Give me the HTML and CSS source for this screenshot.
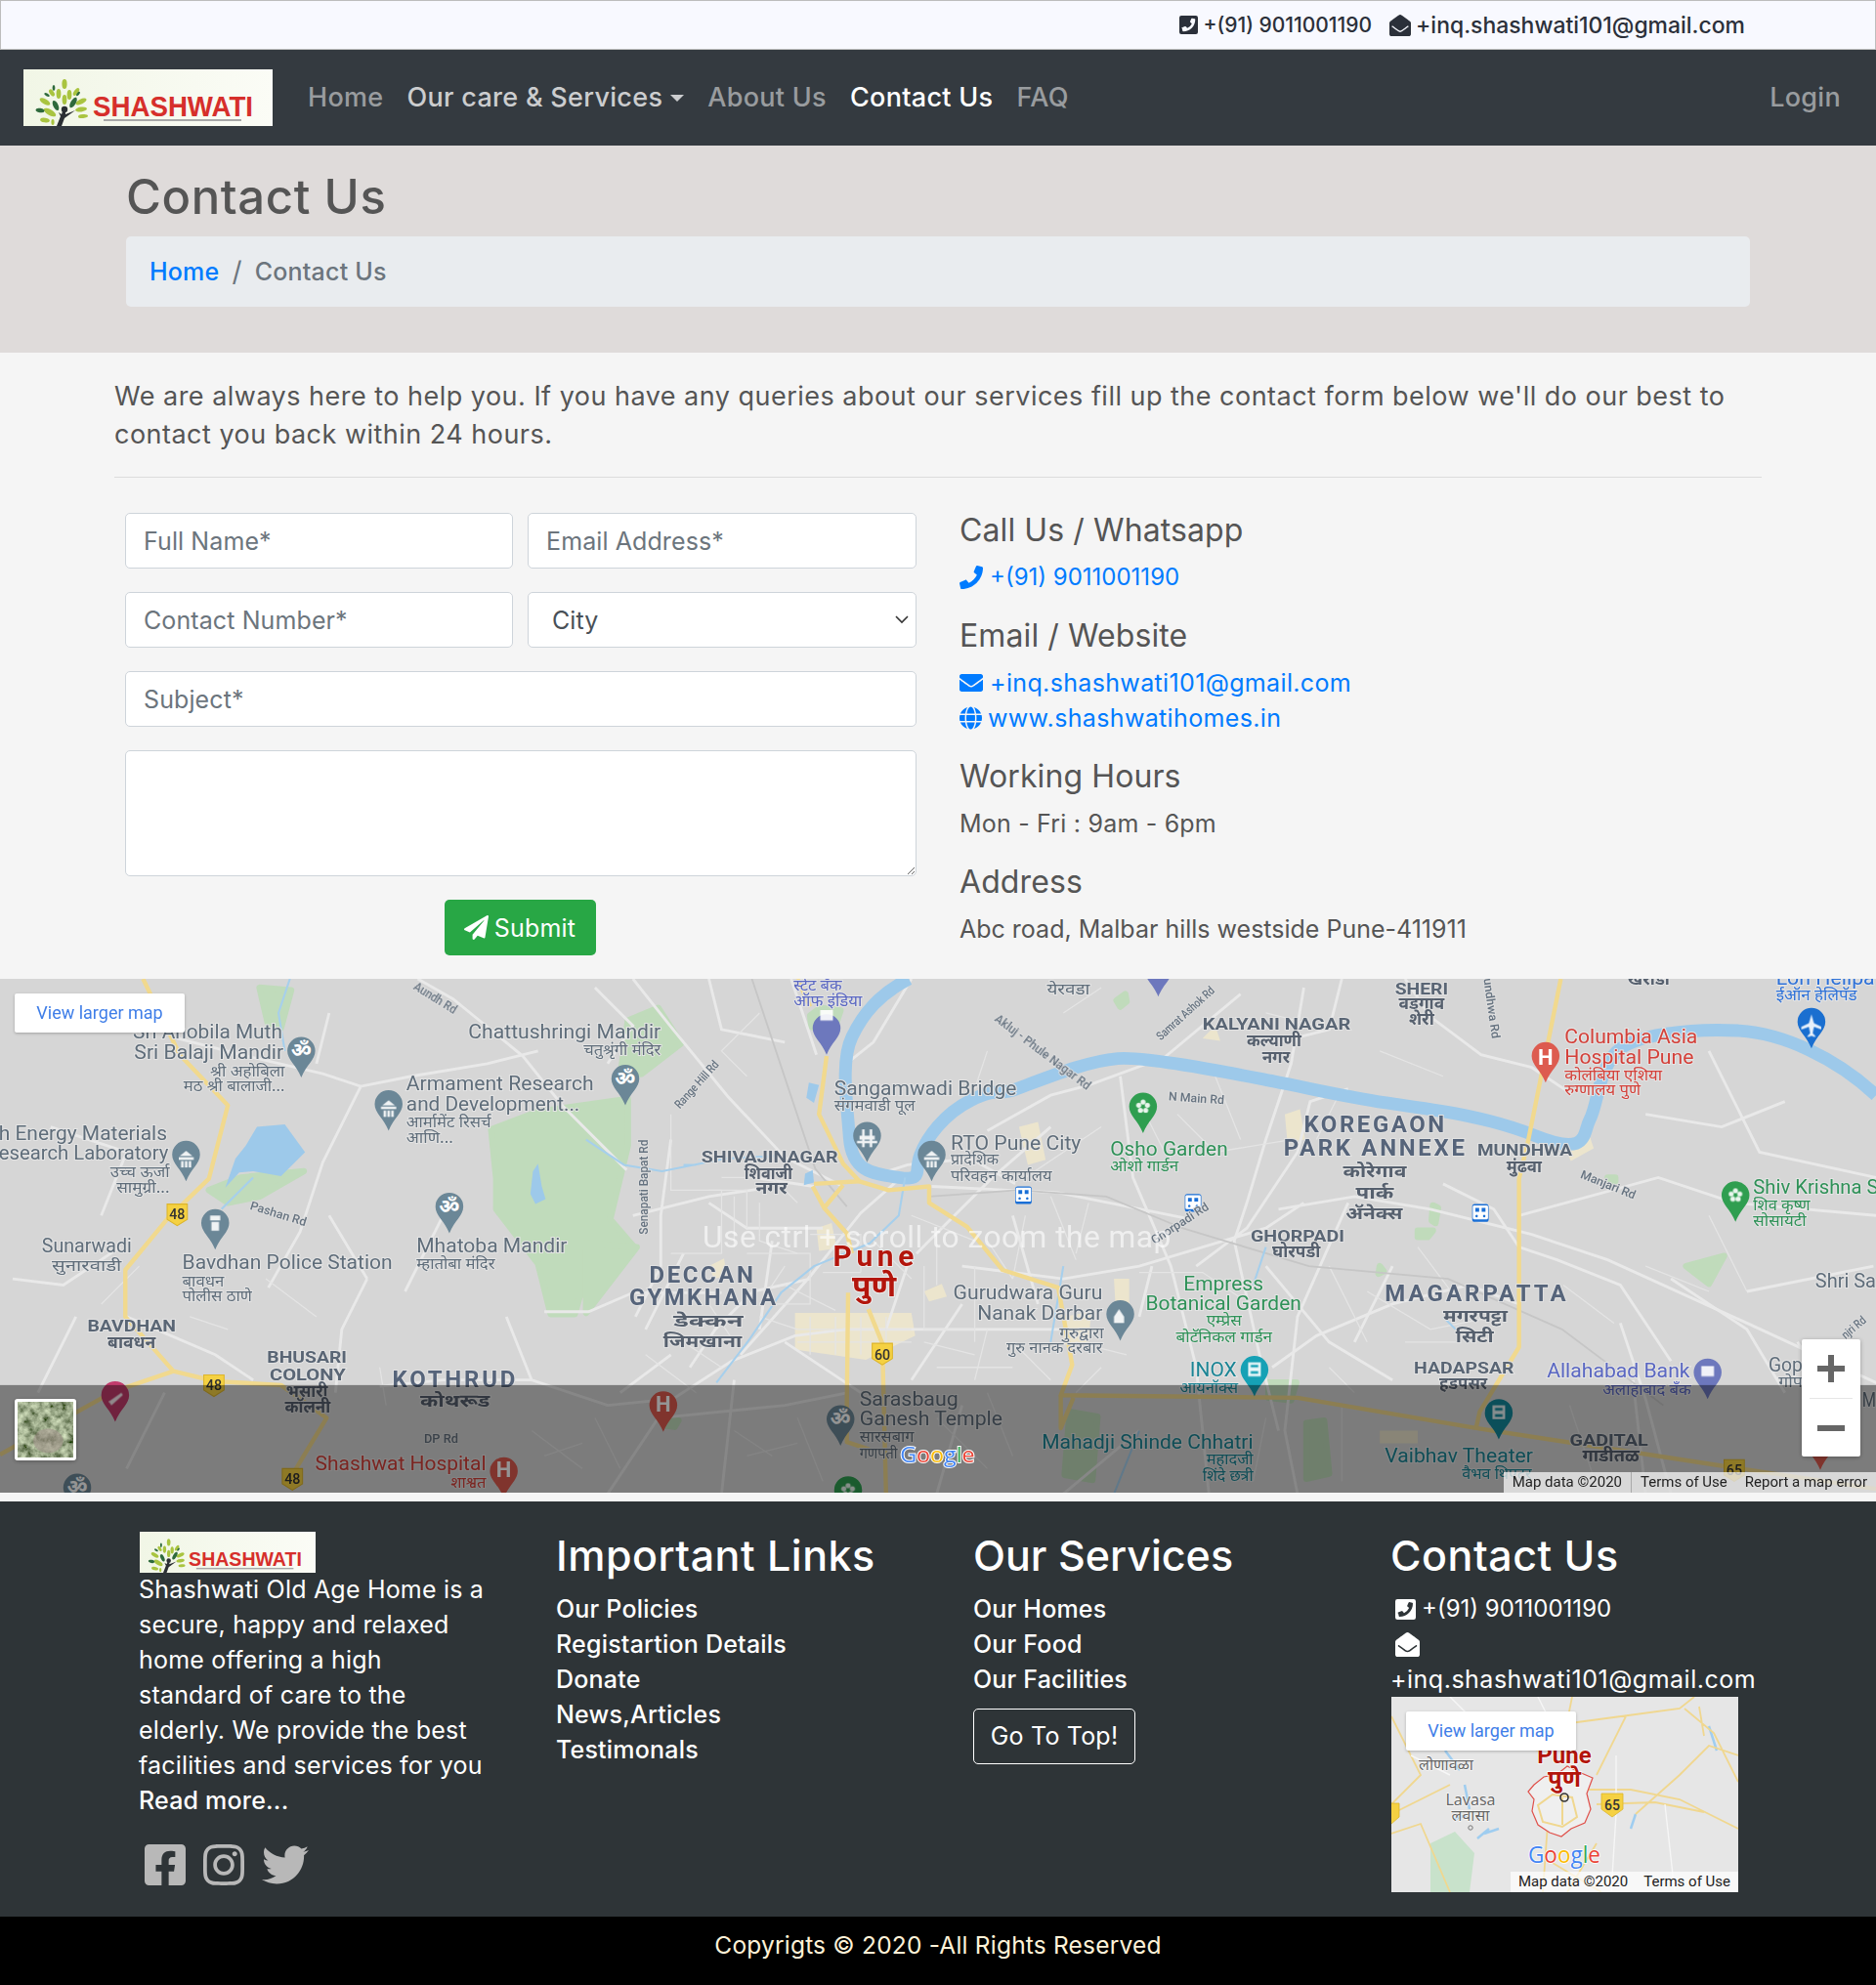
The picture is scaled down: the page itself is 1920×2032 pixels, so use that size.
FILE: index.html
```html
<!DOCTYPE html>
<html lang="en">
<head>
<meta charset="utf-8">
<title>Contact Us</title>
<link rel="stylesheet" href="styles.css">
</head>
<body>
<svg class="defs" width="0" height="0" aria-hidden="true">
  <defs>
    <linearGradient id="logobg" x1="0" x2="1" y1="0" y2="0"><stop offset="0" stop-color="#f1f6e6"/><stop offset="1" stop-color="#fbfcf6"/></linearGradient>
    <filter id="sat" x="0" y="0" width="100%" height="100%">
      <feTurbulence type="fractalNoise" baseFrequency="0.11" numOctaves="4" seed="7"/>
      <feColorMatrix type="matrix" values="1.1 0 0 0 -0.22  1.2 0 0 0 -0.2  0.9 0 0 0 -0.2  0 0 0 0 1"/>
    </filter>
    <symbol id="logo" viewBox="0 0 255 58" preserveAspectRatio="none">
      <rect width="255" height="58" fill="url(#logobg)"/>
      <g class="leaf-l">
        <ellipse cx="42" cy="15" rx="2.6" ry="5"/>
        <ellipse cx="36" cy="25" rx="2.4" ry="5"/>
        <ellipse cx="47" cy="26" rx="2.4" ry="5"/>
        <ellipse cx="42" cy="31" rx="2.4" ry="5"/>
        <ellipse cx="29" cy="24" rx="2.2" ry="4" transform="rotate(-35 29 24)"/>
        <ellipse cx="54" cy="23" rx="2.2" ry="4.5" transform="rotate(35 54 23)"/>
        <ellipse cx="59" cy="33" rx="2.6" ry="6" transform="rotate(65 59 33)"/>
        <ellipse cx="59" cy="41" rx="2.4" ry="6" transform="rotate(82 59 41)"/>
        <ellipse cx="22" cy="33" rx="2.6" ry="6" transform="rotate(-60 22 33)"/>
        <ellipse cx="27" cy="44" rx="3" ry="7" transform="rotate(-60 27 44)"/>
        <ellipse cx="22" cy="52" rx="2.4" ry="5" transform="rotate(-80 22 52)"/>
        <ellipse cx="30" cy="54" rx="1.6" ry="3"/>
        <ellipse cx="61" cy="48" rx="2" ry="5" transform="rotate(85 61 48)"/>
      </g>
      <g class="leaf-d">
        <ellipse cx="31" cy="19" rx="1.4" ry="3"/>
        <ellipse cx="24" cy="26" rx="1.4" ry="3" transform="rotate(-60 24 26)"/>
        <ellipse cx="33" cy="37" rx="2.6" ry="5.5" transform="rotate(-25 33 37)"/>
        <ellipse cx="51" cy="34" rx="2.6" ry="6" transform="rotate(30 51 34)"/>
        <ellipse cx="17" cy="42" rx="2.2" ry="4.5" transform="rotate(-80 17 42)"/>
        <ellipse cx="56" cy="25" rx="1.3" ry="2.6" transform="rotate(40 56 25)"/>
        <path d="M34 58l4-10-2-4 3 2 1-3 3 0 0 3 10-4-11 8-3 8z" class="trunk"/>
        <circle cx="42" cy="41" r="3.2" class="trunk"/>
      </g>
      <text class="logo-word" x="71" y="48" textLength="164" lengthAdjust="spacingAndGlyphs">SHASHWATI</text>
      <rect x="82" y="51" width="141" height="2" fill="#a8a8a8"/>
    </symbol>
    <symbol id="pin" viewBox="0 0 22 32" overflow="visible">
      <path d="M11 0a11 11 0 0 1 11 11c0 7-7 11-11 21C7 22 0 18 0 11A11 11 0 0 1 11 0z"/>
    </symbol>
    <g id="flower">
      <circle cx="0" cy="-3.6" r="2"/><circle cx="3.4" cy="-1.1" r="2"/><circle cx="2.1" cy="2.9" r="2"/><circle cx="-2.1" cy="2.9" r="2"/><circle cx="-3.4" cy="-1.1" r="2"/>
    </g>
    <g id="train">
      <path d="M-5-6h10a1 1 0 0 1 1 1v9a1 1 0 0 1-1 1H-5a1 1 0 0 1-1-1v-9a1 1 0 0 1 1-1zM-4-4v3h3v-3zM1-4v3h3v-3zM-3 1.5a1 1 0 1 0 .01 0zM3 1.5a1 1 0 1 0 .01 0z" fill-rule="evenodd"/>
    </g>
    <symbol id="ic-phone" viewBox="0 0 512 512"><path d="M493.4 24.6l-104-24c-11.3-2.6-22.9 3.3-27.5 13.9l-48 112c-4.2 9.8-1.4 21.3 6.9 28l60.6 49.6c-36 76.7-98.9 140.5-177.2 177.2l-49.6-60.6c-6.8-8.3-18.2-11.1-28-6.9l-112 48C3.9 366.5-2 378.1.6 389.4l24 104C27.7 504.2 37.3 512 48 512c256.1 0 464-207.5 464-464 0-11.2-7.7-20.9-18.6-23.4z"/></symbol>
    <symbol id="ic-env" viewBox="0 0 512 512"><path d="M502.3 190.8c3.9-3.1 9.7-.2 9.7 4.7V400c0 26.5-21.5 48-48 48H48c-26.5 0-48-21.5-48-48V195.6c0-5 5.7-7.8 9.7-4.7 22.4 17.4 52.1 39.5 154.1 113.6 21.1 15.4 56.7 47.8 92.2 47.6 35.7.3 72-32.8 92.3-47.6 102-74.1 131.6-96.3 154-113.7zM256 320c23.2.4 56.6-29.2 73.4-41.4 132.7-96.3 142.8-104.7 173.4-128.7 5.8-4.5 9.2-11.5 9.2-18.9v-19c0-26.5-21.5-48-48-48H48C21.5 64 0 85.5 0 112v19c0 7.4 3.4 14.3 9.2 18.9 30.6 23.9 40.7 32.4 173.4 128.7 16.8 12.2 50.2 41.8 73.4 41.4z"/></symbol>
    <symbol id="ic-globe" viewBox="0 0 496 512"><path d="M336.5 160C322 70.7 287.8 8 248 8s-74 62.7-88.5 152h177zM152 256c0 22.2 1.2 43.5 3.3 64h185.3c2.1-20.5 3.3-41.8 3.3-64s-1.2-43.5-3.3-64H155.3c-2.1 20.5-3.3 41.8-3.3 64zm324.7-96c-28.6-67.9-86.5-120.4-158-141.6 24.4 33.8 41.2 84.7 50 141.6h108zM177.2 18.4C105.8 39.6 47.8 92.1 19.3 160h108c8.7-56.9 25.5-107.8 49.9-141.6zM487.4 192H372.7c2.1 21 3.3 42.5 3.3 64s-1.2 43-3.3 64h114.6c5.5-20.5 8.6-41.8 8.6-64s-3.1-43.5-8.5-64zM120 256c0-21.5 1.2-43 3.3-64H8.6C3.2 212.5 0 233.8 0 256s3.2 43.5 8.6 64h114.6c-2-21-3.2-42.5-3.2-64zm39.5 96c14.5 89.3 48.7 152 88.5 152s74-62.7 88.5-152h-177zm159.3 141.6c71.4-21.2 129.4-73.7 158-141.6h-108c-8.8 56.9-25.6 107.8-50 141.6zM19.3 352c28.6 67.9 86.5 120.4 158 141.6-24.4-33.8-41.2-84.7-50-141.6h-108z"/></symbol>
    <symbol id="ic-phsq" viewBox="0 32 448 448"><path transform="translate(448 0) scale(-1 1)" d="M400 32H48A48 48 0 0 0 0 80v352a48 48 0 0 0 48 48h352a48 48 0 0 0 48-48V80a48 48 0 0 0-48-48zm-16.39 307.37l-15 65A15 15 0 0 1 354 416C194 416 64 286.29 64 126a15.7 15.7 0 0 1 11.63-14.61l65-15A18.23 18.23 0 0 1 144 96a16.27 16.27 0 0 1 13.79 9.09l30 70A17.9 17.9 0 0 1 189 181a17 17 0 0 1-5.5 11.61l-37.89 31a231.91 231.91 0 0 0 110.78 110.78l31-37.89A17 17 0 0 1 309 291a17.9 17.9 0 0 1 5.91 1.21l70 30a16.25 16.25 0 0 1 9.09 13.79 18.23 18.23 0 0 1-.39 3.37z"/></symbol>
    <symbol id="ic-envo" viewBox="0 0 512 512"><path d="M512 464c0 26.51-21.49 48-48 48H48c-26.51 0-48-21.49-48-48V200.724a48 48 0 0 1 18.387-37.776c24.913-19.529 45.501-35.365 164.2-121.511C199.412 29.17 232.797-.347 256 .003c23.198-.354 56.596 29.172 73.413 41.433 118.687 86.137 139.303 101.995 164.2 121.512A48 48 0 0 1 512 200.724V464zm-65.666-196.605c-2.563-3.728-7.7-4.595-11.339-1.907-22.845 16.873-55.462 40.705-105.582 77.079-16.825 12.266-50.21 41.781-73.413 41.43-23.211.344-56.559-29.143-73.413-41.43-50.114-36.37-82.734-60.204-105.582-77.079-3.639-2.688-8.776-1.821-11.339 1.907l-9.072 13.196a7.998 7.998 0 0 0 1.839 10.967c22.887 16.899 55.454 40.69 105.303 76.868 20.274 14.781 56.524 47.813 92.264 47.573 35.724.242 71.961-32.771 92.263-47.573 49.85-36.179 82.418-59.97 105.303-76.868a7.998 7.998 0 0 0 1.839-10.967l-9.071-13.196z"/></symbol>
  </defs>
</svg>

<div class="topbar">
  <span class="top-item top-phone"><svg class="ic ic-top-ph"><use href="#ic-phsq"/></svg>+(91) 9011001190</span>
  <span class="top-item top-mail"><svg class="ic ic-top-en"><use href="#ic-envo"/></svg>+inq.shashwati101@gmail.com</span>
</div>

<nav class="navbar">
  <svg class="nav-logo" role="img" aria-label="Shashwati"><use href="#logo"/></svg>
  <a class="nav-link">Home</a>
  <a class="nav-link nav-open">Our care &amp; Services<span class="caret"></span></a>
  <a class="nav-link">About Us</a>
  <a class="nav-link nav-active">Contact Us</a>
  <a class="nav-link">FAQ</a>
  <a class="nav-link nav-login">Login</a>
</nav>

<header class="page-head">
  <h1 class="page-title">Contact Us</h1>
  <div class="crumbs"><a class="crumb-home">Home</a><span class="crumb-sep">/</span><span class="crumb-cur">Contact Us</span></div>
</header>

<main class="main">
  <p class="intro">We are always here to help you. If you have any queries about our services fill up the contact form below we'll do our best to contact you back within 24 hours.</p>
  <hr class="rule">
  <div class="contact-row">
    <form class="form">
      <div class="form-two">
        <input class="field" placeholder="Full Name*">
        <input class="field" placeholder="Email Address*">
      </div>
      <div class="form-two">
        <input class="field" placeholder="Contact Number*">
        <select class="field field-select"><option>City</option></select>
      </div>
      <input class="field" placeholder="Subject*">
      <textarea class="field field-area"></textarea>
      <button class="submit" type="button"><svg class="ic ic-plane" viewBox="0 0 512 512"><path d="M476 3.2L12.5 270.6c-18.1 10.4-15.8 35.6 2.2 43.2L121 358.4l287.3-253.2c5.5-4.9 13.3 2.6 8.6 8.3L176 407v80.5c0 23.6 28.5 32.9 42.5 15.8L282 426l124.6 52.2c14.2 6 30.4-2.9 33-18.2l72-432C515 7.8 493.3-6.8 476 3.2z"/></svg>Submit</button>
    </form>
    <div class="info">
      <h4 class="info-h">Call Us / Whatsapp</h4>
      <a class="info-link info-phone"><svg class="ic ic-blue"><use href="#ic-phone"/></svg>+(91) 9011001190</a>
      <h4 class="info-h info-next">Email / Website</h4>
      <a class="info-link"><svg class="ic ic-blue"><use href="#ic-env"/></svg>+inq.shashwati101@gmail.com</a>
      <a class="info-link info-web"><svg class="ic ic-blue ic-globe"><use href="#ic-globe"/></svg>www.shashwatihomes.in</a>
      <h4 class="info-h info-next">Working Hours</h4>
      <p class="info-text">Mon - Fri : 9am - 6pm</p>
      <h4 class="info-h info-next">Address</h4>
      <p class="info-text info-addr">Abc road, Malbar hills westside Pune-411911</p>
    </div>
  </div>
</main>

<section class="map">
  <svg class="map-svg" viewBox="0 773 1482 406" preserveAspectRatio="none">
    <rect x="0" y="773" width="1482" height="406" fill="#d6d6d6"/>
    <!-- parks -->
    <g class="park">
      <path d="M388 892L425 878 496 868 496 905 482 963 501 985 458 1024 454 1038 435 1038 425 998 392 955 392 931z"/>
      <path d="M496 806L520 796 538 824 507 848 490 850z"/>
      <path d="M463 982L503 985 463 1037z"/>
      <path d="M165 940L190 930 240 925 205 945 180 950z"/>
      <path d="M205 780L230 782 222 812 212 810z"/>
      <path d="M1270 930h6v3h-6zM1120 972h12l-4 5h-8zM1090 1000l3 4-4 2zM845 1115l22 4-4 50-22-4zM1032 1124l14-2 4 42-18 4zM1332 1000l30-8-12 22z"/>
      <path d="M882 790l7-5 1 6-5 4zM1002 1092h22l-4 14-18-2zM1132 952l4 2-2 12-3-2zM522 1122l14 0-3 5-8-1zM640 802l8-6 16 2-6 18-17-5z"/>
    </g>
    <!-- urban -->
    <g class="urban">
      <path d="M628 1037L720 1037 723 1055 684 1074 628 1066z"/>
      <path d="M805 890l15-4 6 30-14 4zM1015 880l12-4 4 24-14 2zM1235 905l20-10 4 12-18 10zM880 1010l12 0 0 36-10 0zM645 970l12-4 4 20-14 2zM840 1040l22-4-2 24-20 2zM1090 1130h30v10h-30zM730 1020l14-6 4 10-14 4zM950 820l10-10 4 12zM560 1000l12-6 2 14-10 2z"/>
    </g>
    <!-- white roads -->
    <g class="road">
      <path d="M500 773l30 38 45 55 45 48 44 22M330 773l28 16 55 45 32 40 50 50M140 820l55 14 60 14 30 10 40-8 60-10 40-10M285 858l-30 60-18 55-25 44M430 1036l35 0 35-15 70 0M595 930l48 7M500 960l60-15 40-6"/>
      <path d="M585 1070l55-62 40-50 34-30M516 1115l62-40 50-20 40-5 50 0 120 0M640 1010l-45 10-30 30-20 30M625 773l20 60M720 773l-30 50-25 20M802 935l-35-20-50 5-25 8M830 890l-46 40-40 40-20 20M760 1000l80 10 60-10 100-30 30-20M736 937l100 5 100 20M945 1000l40-30 40-60 10-40 30-10M1010 955l60-10 60 10 80 20 60 20 110 50 130 60"/>
      <path d="M980 785l-60 50-60 22-30 8-50 28M1030 780l-10 60-20 60-15 50-10 30 20 90 15 60M1110 773l20 30 40 30 40 10 30 20M1140 935l40 20 20 30 30 10 50 20 40 60M1200 960l110 -30 60 20 112 10M885 850l10 80 30 70 20 80 10 100M1065 950l-40 90-10 90 10 50M1200 1030l-40 -15 -60 15 -60 25 -35 25M1280 1045l20 60 20 75"/>
      <path d="M300 1095l50-5 70 0 60 20 50-5M10 1010l40 5 45-30M100 1040l70 30 30 20M290 1010l-20 40-5 50M260 960l30 50M130 1100l-30 60M400 1040l20 50M520 1120l100-10 50-10M520 1120l-40 60M580 1090l-10 90M760 1110l-20 70M900 1130l-60 50M1290 1090l10 90M1420 1060l40 60M1380 1020l100 -20M1350 830l40 80 92 20"/>
      <path d="M530 900l-8 60 0 40 -20 40M560 950l30 20 60 0M610 980l-10 70M720 990l-20 60M760 1030l-40 60M620 1060l60 40M530 1070l-40 30M540 990l-30 60M800 960l20 70M900 1040l10 -40M1000 1000l50 60 50 30M1100 1000l-30 60M560 773l10 40 50 10M470 780l30 30 -20 30M260 800l-10 40M40 890l60 20 -20 50M350 960l-30 60M60 1040l-30 60M1060 773l-10 40 -40 10M1300 880l60 10 50 -20M1320 1010l60 40 30 50"/>
    </g>
    <g class="road-thin">
      <path d="M530 880v60h40v50h-40M570 930h40l20 20M580 945v40M590 990h50v40h-30M620 1000l-20 30M730 1000v50h40M770 1000v60M640 1040v30M660 1040v30M680 1040v30M700 1040v30M630 1050h90M630 1060h90M870 890l-60 40M900 1005h50l30 20M1050 1000l30 60M1120 985l30 40M1080 1020l50 30 50-10M1235 1015l40 30M1110 1060h40M1050 1080l20 20M1350 960l30 60M1300 1000l50 20M80 1030l30-30M150 1040l30 10M210 1010l40 30M300 1080l5 30M420 1130l40 30M430 1150l30-10M470 1120l20 40M580 1130l30 20M590 1150l40-10M630 1120l20 50M740 1120l40 40M780 1100l20 50M1000 1120l-10 50M1060 1110l0 60M1240 1110l20 60"/>
      <path d="M560 940h30v30M600 950v30l30 10M640 975h40v30M690 980l30 30M720 960l50 20M740 975v40M780 980l20 30M810 960l-10 50M830 945l20 50M860 950l-10 40M650 1005h30M620 1015l40 20M600 1040l30 10M560 1030l20 30M540 1060l30 20M510 1070l40 30M730 1060l40 10M740 1080h60M780 1050l-10 40M800 1060l30 30M850 1060l40 10M870 1080l-20 20M900 870l20 40M930 880l30 30 60-10M960 850l20 50M1060 860l-20 40M1090 830l50 20M1000 800l40 10M840 800l30-20M780 830l-10 30M600 800l-30 30 20 20"/>
    </g>
    <path class="rail" d="M594 773l50 150 25 30M734 945l70 -5 70 5 60 25 100 30 110 10 90 40 80 60"/>
    <!-- water -->
    <path class="lake" d="M203 890L225 888 241 910 222 929 200 925 189 926 178 938 186 915 194 905z"/>
    <path class="lake" d="M421 925l4-6 3 18 3 10-8 4-4-8zM636 927l6-3 1 10-8 2zM639 855l8 2-4 14-6-4z"/>
    <path class="river" d="M718 773C695 785 682 800 673 819S669 870 671 898 690 927 710 930 722 925 727 912 745 880 767 869 788 866 803 860C835 848 860 838 883 836S975 848 1006 854 1062 866 1095 871 1170 880 1213 897 1250 895 1256 884 1262 850 1275 833 1340 812 1374 814 1450 835 1482 865"/>
    <path class="river-thin" d="M715 930l-5 30-23 22-44 18-26 21-25 37-26 34M200 930l-25 25M463 900l30 20 30 5 50-10 40-2M540 920l10 0M840 1000l-10 60M900 1130l-20 50M1000 985l-10 30M230 770l-10 30 5 30M1140 1040l10 10"/>
    <!-- highways -->
    <g class="hwy">
      <path d="M653 834L647 880 666 919 679 933 702 940 734 937 734 950 764 969 792 1003 836 1017 847 1078 838 1102 1025 1104 1166 1128 1355 1157 1482 1176"/>
      <path d="M643 935L679 933M642 937L651 954 669 974 673 990M651 954L666 936M670 1021L669 1108 669 1139 687 1145M686 1034L697 1061 700 1181M838 1102L838 1128 848 1104"/>
      <path d="M1233 773L1207 902 1200 931 1200 1064 1169 1115 1166 1128"/>
      <path d="M113 773L142 833 180 873 165 931 132 963 99 1003 99 1040 137 1083 170 1091 222 1094 258 1120 232 1163M90 1099L137 1083M0 1149L90 1099"/>
      <path d="M630 773l10 22"/>
    </g>
    <!-- pins -->
    <g class="pin-slate">
      <use href="#pin" x="227" y="819" width="22" height="32"/>
      <use href="#pin" x="483" y="841" width="22" height="32"/>
      <use href="#pin" x="296" y="861" width="22" height="32"/>
      <use href="#pin" x="136" y="901" width="22" height="32"/>
      <use href="#pin" x="344" y="942" width="22" height="32"/>
      <use href="#pin" x="159" y="955" width="22" height="32"/>
      <use href="#pin" x="653" y="1110" width="22" height="32"/>
      <use href="#pin" x="50" y="1164" width="22" height="32"/>
      <use href="#pin" x="674" y="886" width="22" height="32"/>
      <use href="#pin" x="725" y="901" width="22" height="32"/>
      <use href="#pin" x="874" y="1027" width="22" height="32"/>
    </g>
    <g class="pin-indigo">
      <use href="#pin" x="642" y="801" width="22" height="32"/>
      <use href="#pin" x="904" y="755" width="22" height="32"/>
      <use href="#pin" x="1338" y="1073" width="22" height="32"/>
    </g>
    <g class="pin-green">
      <use href="#pin" x="892" y="863" width="22" height="32"/>
      <use href="#pin" x="1360" y="933" width="22" height="32"/>
      <use href="#pin" x="659" y="1166" width="22" height="32"/>
    </g>
    <g class="pin-red">
      <use href="#pin" x="1210" y="823" width="22" height="32"/>
      <use href="#pin" x="513" y="1099" width="22" height="32"/>
      <use href="#pin" x="387" y="1151" width="22" height="32"/>
      <use href="#pin" x="1427" y="1129" width="22" height="32"/>
    </g>
    <use class="pin-blue" href="#pin" x="1420" y="796" width="22" height="32"/>
    <use class="pin-teal" href="#pin" x="980" y="1071" width="22" height="32"/>
    <use class="pin-teal2" href="#pin" x="1173" y="1105" width="22" height="32"/>
    <use class="pin-pink" href="#pin" x="80" y="1091" width="22" height="32"/>
    <!-- pin glyphs -->
    <g class="om">
      <text x="238" y="835">ॐ</text><text x="494" y="857">ॐ</text><text x="355" y="958">ॐ</text><text x="664" y="1126">ॐ</text><text x="61" y="1180">ॐ</text>
    </g>
    <g class="glyph">
      <path d="M301 876v-2h12v2zM302 873l5-4 5 4zM303 877h2v5h-2zM306 877h2v5h-2zM309 877h2v5h-2zM141 916v-2h12v2zM142 913l5-4 5 4zM143 917h2v5h-2zM146 917h2v5h-2zM149 917h2v5h-2zM730 916v-2h12v2zM731 913l5-4 5 4zM732 917h2v5h-2zM735 917h2v5h-2zM738 917h2v5h-2zM679 897h12v3h-12zM677 901h16v2h-16zM681 892h2v14h-2zM687 892h2v14h-2zM166 960h8v4h-8zM167 965h6v7h-6zM880 1040l4-6 4 6v5h-8z"/>
      <use href="#flower" x="903" y="874"/><use href="#flower" x="1371" y="944"/><use href="#flower" x="670" y="1177"/>
      <path d="M1431 801l2 7 6 3v2l-6-2-1 5 2 2v1l-3-1-3 1v-1l2-2-1-5-6 2v-2l6-3z"/>
      <path d="M986 1076h10v11h-10zM988 1078v2h6v-2zM988 1083v2h6v-2z" fill-rule="evenodd"/>
      <path d="M1179 1110h10v11h-10zM1181 1112v2h6v-2zM1181 1117v2h6v-2z" fill-rule="evenodd"/>
      <path d="M648 798h10v8h-10zM1344 1079h10v8h-10z"/>
      <path d="M86 1107l10-7 1 2-9 8zM91 1100l6 10"/>
    </g>
    <g class="pin-h">
      <text x="1221" y="841" text-anchor="middle">H</text>
      <text x="524" y="1115" text-anchor="middle">H</text>
      <text x="398" y="1167" text-anchor="middle">H</text>
    </g>
    <!-- metro -->
    <g class="metro"><rect x="802" y="937" width="13" height="14" rx="2"/><rect x="936" y="943" width="13" height="14" rx="2"/><rect x="1163" y="951" width="13" height="14" rx="2"/></g>
    <g class="metro-in"><use href="#train" x="808.500" y="944"/><use href="#train" x="942.500" y="950"/><use href="#train" x="1169.500" y="958"/></g>
    <!-- shields -->
    <g class="shield">
      <path d="M132 951h16v12l-8 5-8-5z"/><path d="M161 1086h16v12l-8 5-8-5z"/><path d="M223 1160h16v12l-8 5-8-5z"/><path d="M689 1061h16v12l-8 5-8-5z"/><path d="M1362 1153h16v12l-8 5-8-5z"/>
    </g>
    <g class="shield-t">
      <text x="140" y="963">48</text><text x="169" y="1098">48</text><text x="231" y="1172">48</text><text x="697" y="1074">60</text><text x="1370" y="1165">65</text>
    </g>
    <!-- road names -->
    <g class="rd">
      <text transform="translate(326 781) rotate(32)" textLength="38" lengthAdjust="spacingAndGlyphs">Aundh Rd</text>
      <text transform="translate(537 876) rotate(-48)" textLength="47" lengthAdjust="spacingAndGlyphs">Range Hill Rd</text>
      <text transform="translate(197 955) rotate(17)" textLength="46" lengthAdjust="spacingAndGlyphs">Pashan Rd</text>
      <text transform="translate(512 975) rotate(-90)" textLength="75" lengthAdjust="spacingAndGlyphs">Senapati Bapat Rd</text>
      <text transform="translate(785 806) rotate(37)" textLength="92" lengthAdjust="spacingAndGlyphs">Akluj - Phule Nagar Rd</text>
      <text transform="translate(917 822) rotate(-42)" textLength="58" lengthAdjust="spacingAndGlyphs">Samrat Ashok Rd</text>
      <text transform="translate(923 869) rotate(4)" textLength="44" lengthAdjust="spacingAndGlyphs">N Main Rd</text>
      <text transform="translate(1248 930) rotate(22)" textLength="46" lengthAdjust="spacingAndGlyphs">Manjari Rd</text>
      <text transform="translate(912 983) rotate(-33)" textLength="52" lengthAdjust="spacingAndGlyphs">Ghorpadi Rd</text>
      <text transform="translate(1172 773) rotate(82)" textLength="48" lengthAdjust="spacingAndGlyphs">undhwa Rd</text>
      <text transform="translate(335 1140)" textLength="27" lengthAdjust="spacingAndGlyphs">DP Rd</text>
      <text transform="translate(1458 1058) rotate(-40)" textLength="22" lengthAdjust="spacingAndGlyphs">njri Rd</text>
    </g>
    <!-- place labels -->
    <g class="lbl">
      <text x="105" y="820" textLength="118" lengthAdjust="spacingAndGlyphs">Sri Ahobila Muth</text>
      <text x="106" y="836" textLength="118" lengthAdjust="spacingAndGlyphs">Sri Balaji Mandir</text>
      <text x="370" y="820" textLength="152" lengthAdjust="spacingAndGlyphs">Chattushringi Mandir</text>
      <text x="321" y="861" textLength="148" lengthAdjust="spacingAndGlyphs">Armament Research</text>
      <text x="321" y="877" textLength="137" lengthAdjust="spacingAndGlyphs">and Development...</text>
      <text x="-1" y="900" textLength="133" lengthAdjust="spacingAndGlyphs">h Energy Materials</text>
      <text x="-1" y="916" textLength="134" lengthAdjust="spacingAndGlyphs">esearch Laboratory</text>
      <text x="33" y="989" textLength="71" lengthAdjust="spacingAndGlyphs">Sunarwadi</text>
      <text x="144" y="1002" textLength="166" lengthAdjust="spacingAndGlyphs">Bavdhan Police Station</text>
      <text x="329" y="989" textLength="119" lengthAdjust="spacingAndGlyphs">Mhatoba Mandir</text>
      <text x="659" y="865" textLength="144" lengthAdjust="spacingAndGlyphs">Sangamwadi Bridge</text>
      <text x="751" y="908" textLength="103" lengthAdjust="spacingAndGlyphs">RTO Pune City</text>
      <text x="679" y="1110" textLength="78" lengthAdjust="spacingAndGlyphs">Sarasbaug</text>
      <text x="679" y="1126" textLength="113" lengthAdjust="spacingAndGlyphs">Ganesh Temple</text>
      <text x="753" y="1026" textLength="118" lengthAdjust="spacingAndGlyphs">Gurudwara Guru</text>
      <text x="772" y="1042" textLength="99" lengthAdjust="spacingAndGlyphs">Nanak Darbar</text>
      <text x="1434" y="1017" textLength="48" lengthAdjust="spacingAndGlyphs">Shri Sa</text>
      <text x="1397" y="1083" textLength="27" lengthAdjust="spacingAndGlyphs">Gop</text>
      <text x="1471" y="1111" textLength="11" lengthAdjust="spacingAndGlyphs">M</text>
    </g>
    <g class="dev">
      <text x="166" y="850" textLength="59" lengthAdjust="spacingAndGlyphs">श्री अहोबिला</text>
      <text x="145" y="862" textLength="80" lengthAdjust="spacingAndGlyphs">मठ श्री बालाजी...</text>
      <text x="461" y="833" textLength="61" lengthAdjust="spacingAndGlyphs">चतुश्रृंगी मंदिर</text>
      <text x="321" y="890" textLength="67" lengthAdjust="spacingAndGlyphs">आर्मामेंट रिसर्च</text>
      <text x="321" y="903" textLength="37" lengthAdjust="spacingAndGlyphs">आणि...</text>
      <text x="87" y="930" textLength="47" lengthAdjust="spacingAndGlyphs">उच्च ऊर्जा</text>
      <text x="92" y="942" textLength="42" lengthAdjust="spacingAndGlyphs">सामुग्री...</text>
      <text x="41" y="1004" textLength="55" lengthAdjust="spacingAndGlyphs">सुनारवाडी</text>
      <text x="144" y="1016" textLength="33" lengthAdjust="spacingAndGlyphs">बावधन</text>
      <text x="144" y="1028" textLength="55" lengthAdjust="spacingAndGlyphs">पोलीस ठाणे</text>
      <text x="329" y="1002" textLength="62" lengthAdjust="spacingAndGlyphs">म्हातोबा मंदिर</text>
      <text x="659" y="877" textLength="64" lengthAdjust="spacingAndGlyphs">संगमवाडी पूल</text>
      <text x="751" y="920" textLength="38" lengthAdjust="spacingAndGlyphs">प्रादेशिक</text>
      <text x="751" y="933" textLength="80" lengthAdjust="spacingAndGlyphs">परिवहन कार्यालय</text>
      <text x="679" y="1139" textLength="43" lengthAdjust="spacingAndGlyphs">सारसबाग</text>
      <text x="679" y="1152" textLength="30" lengthAdjust="spacingAndGlyphs">गणपती</text>
      <text x="837" y="1057" textLength="35" lengthAdjust="spacingAndGlyphs">गुरुद्वारा</text>
      <text x="795" y="1069" textLength="76" lengthAdjust="spacingAndGlyphs">गुरु नानक दरबार</text>
      <text x="827" y="785" textLength="34" lengthAdjust="spacingAndGlyphs">येरवडा</text>
      <text x="1405" y="1096" textLength="19" lengthAdjust="spacingAndGlyphs">गोप</text>
    </g>
    <g class="area">
      <text x="69" y="1052" textLength="70" lengthAdjust="spacingAndGlyphs">BAVDHAN</text>
      <text x="211" y="1076" textLength="63" lengthAdjust="spacingAndGlyphs">BHUSARI</text>
      <text x="213" y="1090" textLength="60" lengthAdjust="spacingAndGlyphs">COLONY</text>
      <text x="554" y="918" textLength="108" lengthAdjust="spacingAndGlyphs">SHIVAJINAGAR</text>
      <text x="950" y="813" textLength="117" lengthAdjust="spacingAndGlyphs">KALYANI NAGAR</text>
      <text x="1102" y="785" textLength="42" lengthAdjust="spacingAndGlyphs">SHERI</text>
      <text x="1167" y="913" textLength="75" lengthAdjust="spacingAndGlyphs">MUNDHWA</text>
      <text x="988" y="981" textLength="74" lengthAdjust="spacingAndGlyphs">GHORPADI</text>
      <text x="1117" y="1085" textLength="79" lengthAdjust="spacingAndGlyphs">HADAPSAR</text>
      <text x="1240" y="1142" textLength="62" lengthAdjust="spacingAndGlyphs">GADITAL</text>
    </g>
    <g class="area-big">
      <text x="310" y="1096" textLength="97" lengthAdjust="spacing">KOTHRUD</text>
      <text x="513" y="1013" textLength="82" lengthAdjust="spacing">DECCAN</text>
      <text x="497" y="1031" textLength="116" lengthAdjust="spacing">GYMKHANA</text>
      <text x="1030" y="894" textLength="111" lengthAdjust="spacing">KOREGAON</text>
      <text x="1014" y="913" textLength="143" lengthAdjust="spacing">PARK ANNEXE</text>
      <text x="1094" y="1028" textLength="143" lengthAdjust="spacing">MAGARPATTA</text>
    </g>
    <g class="dev-b">
      <text x="85" y="1065" textLength="38" lengthAdjust="spacingAndGlyphs">बावधन</text>
      <text x="226" y="1103" textLength="33" lengthAdjust="spacingAndGlyphs">भसारी</text>
      <text x="225" y="1116" textLength="36" lengthAdjust="spacingAndGlyphs">कॉलनी</text>
      <text x="332" y="1111" textLength="55" lengthAdjust="spacingAndGlyphs">कोथरूड</text>
      <text x="532" y="1048" textLength="55" lengthAdjust="spacingAndGlyphs">डेक्कन</text>
      <text x="524" y="1064" textLength="62" lengthAdjust="spacingAndGlyphs">जिमखाना</text>
      <text x="588" y="931" textLength="38" lengthAdjust="spacingAndGlyphs">शिवाजी</text>
      <text x="597" y="943" textLength="25" lengthAdjust="spacingAndGlyphs">नगर</text>
      <text x="985" y="826" textLength="43" lengthAdjust="spacingAndGlyphs">कल्याणी</text>
      <text x="997" y="839" textLength="22" lengthAdjust="spacingAndGlyphs">नगर</text>
      <text x="1105" y="797" textLength="36" lengthAdjust="spacingAndGlyphs">वडगाव</text>
      <text x="1113" y="809" textLength="20" lengthAdjust="spacingAndGlyphs">शेरी</text>
      <text x="1286" y="778" textLength="33" lengthAdjust="spacingAndGlyphs">खराडी</text>
      <text x="1061" y="930" textLength="50" lengthAdjust="spacingAndGlyphs">कोरेगाव</text>
      <text x="1071" y="947" textLength="30" lengthAdjust="spacingAndGlyphs">पार्क</text>
      <text x="1063" y="963" textLength="45" lengthAdjust="spacingAndGlyphs">ॲनेक्स</text>
      <text x="1190" y="926" textLength="28" lengthAdjust="spacingAndGlyphs">मुंढवा</text>
      <text x="1005" y="993" textLength="38" lengthAdjust="spacingAndGlyphs">घोरपडी</text>
      <text x="1140" y="1044" textLength="51" lengthAdjust="spacingAndGlyphs">मगरपट्टा</text>
      <text x="1150" y="1060" textLength="30" lengthAdjust="spacingAndGlyphs">सिटी</text>
      <text x="1137" y="1097" textLength="38" lengthAdjust="spacingAndGlyphs">हडपसर</text>
      <text x="1250" y="1154" textLength="45" lengthAdjust="spacingAndGlyphs">गाडीतळ</text>
    </g>
    <g class="c-green">
      <text class="sz" x="877" y="913" textLength="93" lengthAdjust="spacingAndGlyphs">Osho Garden</text>
      <text class="sz" x="935" y="1019" textLength="63" lengthAdjust="spacingAndGlyphs">Empress</text>
      <text class="sz" x="905" y="1035" textLength="123" lengthAdjust="spacingAndGlyphs">Botanical Garden</text>
      <text class="sz" x="1385" y="943" textLength="99" lengthAdjust="spacingAndGlyphs">Shiv Krishna S</text>
      <text class="szd" x="877" y="925" textLength="54" lengthAdjust="spacingAndGlyphs">ओशो गार्डन</text>
      <text class="szd" x="953" y="1047" textLength="28" lengthAdjust="spacingAndGlyphs">एम्प्रेस</text>
      <text class="szd" x="929" y="1060" textLength="76" lengthAdjust="spacingAndGlyphs">बोटॅनिकल गार्डन</text>
      <text class="szd" x="1385" y="956" textLength="45" lengthAdjust="spacingAndGlyphs">शिव कृष्ण</text>
      <text class="szd" x="1385" y="968" textLength="42" lengthAdjust="spacingAndGlyphs">सोसायटी</text>
    </g>
    <g class="c-red">
      <text class="sz" x="1236" y="824" textLength="105" lengthAdjust="spacingAndGlyphs">Columbia Asia</text>
      <text class="sz" x="1236" y="840" textLength="102" lengthAdjust="spacingAndGlyphs">Hospital Pune</text>
      <text class="sz" x="249" y="1161" textLength="135" lengthAdjust="spacingAndGlyphs">Shashwat Hospital</text>
      <text class="szd" x="1236" y="853" textLength="77" lengthAdjust="spacingAndGlyphs">कोलंबिया एशिया</text>
      <text class="szd" x="1236" y="865" textLength="60" lengthAdjust="spacingAndGlyphs">रुग्णालय पुणे</text>
      <text class="szd" x="356" y="1175" textLength="28" lengthAdjust="spacingAndGlyphs">शाश्वत</text>
    </g>
    <g class="c-indigo">
      <text class="szd" x="627" y="782" textLength="38" lengthAdjust="spacingAndGlyphs">स्टेट बँक</text>
      <text class="szd" x="627" y="795" textLength="54" lengthAdjust="spacingAndGlyphs">ऑफ इंडिया</text>
      <text class="sz" x="1222" y="1088" textLength="113" lengthAdjust="spacingAndGlyphs">Allahabad Bank</text>
      <text class="szd" x="1266" y="1102" textLength="70" lengthAdjust="spacingAndGlyphs">अलाहाबाद बँक</text>
    </g>
    <g class="c-blue">
      <text class="sz" x="1403" y="778" textLength="78" lengthAdjust="spacingAndGlyphs">Lon Helipa</text>
      <text class="szd" x="1403" y="790" textLength="64" lengthAdjust="spacingAndGlyphs">ईऑन हेलिपॅड</text>
    </g>
    <g class="c-teal">
      <text class="sz" x="940" y="1087" textLength="37" lengthAdjust="spacingAndGlyphs">INOX</text>
      <text class="szd" x="932" y="1100" textLength="46" lengthAdjust="spacingAndGlyphs">आयनॉक्स</text>
      <text class="sz" x="823" y="1144" textLength="167" lengthAdjust="spacingAndGlyphs">Mahadji Shinde Chhatri</text>
      <text class="szd" x="953" y="1157" textLength="37" lengthAdjust="spacingAndGlyphs">महादजी</text>
      <text class="szd" x="950" y="1170" textLength="40" lengthAdjust="spacingAndGlyphs">शिंदे छत्री</text>
      <text class="sz" x="1094" y="1155" textLength="117" lengthAdjust="spacingAndGlyphs">Vaibhav Theater</text>
      <text class="szd" x="1155" y="1168" textLength="55" lengthAdjust="spacingAndGlyphs">वैभव थिएटर</text>
    </g>
    <g class="city">
      <text class="city-en" x="658" y="1000" textLength="64" lengthAdjust="spacing">Pune</text>
      <text class="city-hi" x="673" y="1024" textLength="35" lengthAdjust="spacingAndGlyphs">पुणे</text>
    </g>
    <text class="hint" x="555" y="985" textLength="370" lengthAdjust="spacing">Use ctrl + scroll to zoom the map</text>
    <rect class="band" x="0" y="1094" width="1482" height="85"/>
    <text class="g-logo" x="711" y="1155" textLength="59" lengthAdjust="spacingAndGlyphs"><tspan class="g-b">G</tspan><tspan class="g-r">o</tspan><tspan class="g-y">o</tspan><tspan class="g-b">g</tspan><tspan class="g-g">l</tspan><tspan class="g-r">e</tspan></text>
  </svg>
  <a class="map-btn">View larger map</a>
  <svg class="map-thumb" viewBox="0 0 60 60" preserveAspectRatio="none">
    <rect width="60" height="60" filter="url(#sat)"/>
    <ellipse cx="33" cy="42" rx="16" ry="13" fill="#a08f8a" opacity=".55"/>
  </svg>
  <div class="map-zoom"><span class="zoom-plus"></span><span class="zoom-sep"></span><span class="zoom-minus"></span></div>
  <div class="map-attr"><span class="attr-item">Map data ©2020</span><span class="attr-item attr-line">Terms of Use</span><span class="attr-item">Report a map error</span></div>
</section>

<footer class="footer">
  <div class="foot-col">
    <svg class="foot-logo" role="img" aria-label="Shashwati"><use href="#logo"/></svg>
    <p class="foot-text">Shashwati Old Age Home is a<br>secure, happy and relaxed<br>home offering a high<br>standard of care to the<br>elderly. We provide the best<br>facilities and services for you</p>
    <a class="foot-link">Read more...</a>
    <div class="social">
      <svg class="soc soc-fb" viewBox="0 32 448 448"><path d="M400 32H48A48 48 0 0 0 0 80v352a48 48 0 0 0 48 48h137.25V327.69h-63V256h63v-54.64c0-62.15 37-96.48 93.67-96.48 27.14 0 55.52 4.84 55.52 4.84v61h-31.27c-30.81 0-40.42 19.12-40.42 38.73V256h68.78l-11 71.69h-57.78V480H400a48 48 0 0 0 48-48V80a48 48 0 0 0-48-48z"/></svg>
      <svg class="soc soc-ig" viewBox="0 32 448 448"><path d="M224.1 141c-63.6 0-114.9 51.3-114.9 114.9s51.3 114.9 114.9 114.9S339 319.5 339 255.9 287.7 141 224.1 141zm0 189.6c-41.1 0-74.7-33.5-74.7-74.7s33.5-74.7 74.7-74.7 74.7 33.5 74.7 74.7-33.6 74.7-74.7 74.7zm146.4-194.3c0 14.9-12 26.8-26.8 26.8-14.9 0-26.8-12-26.8-26.8s12-26.8 26.8-26.8 26.8 12 26.8 26.8zm76.1 27.2c-1.7-35.9-9.9-67.7-36.2-93.9-26.2-26.2-58-34.4-93.9-36.2-37-2.1-147.9-2.1-184.9 0-35.8 1.7-67.6 9.9-93.9 36.1s-34.4 58-36.2 93.9c-2.1 37-2.1 147.9 0 184.9 1.7 35.9 9.9 67.7 36.2 93.9s58 34.4 93.9 36.2c37 2.1 147.9 2.1 184.9 0 35.9-1.7 67.7-9.9 93.9-36.2 26.2-26.2 34.4-58 36.2-93.9 2.1-37 2.1-147.8 0-184.8zM398.8 388c-7.8 19.6-22.9 34.7-42.6 42.6-29.5 11.7-99.5 9-132.1 9s-102.7 2.6-132.1-9c-19.6-7.8-34.7-22.9-42.6-42.6-11.7-29.5-9-99.5-9-132.1s-2.6-102.7 9-132.1c7.8-19.6 22.9-34.7 42.6-42.6 29.5-11.7 99.5-9 132.1-9s102.7-2.6 132.1 9c19.6 7.8 34.7 22.9 42.6 42.6 11.7 29.5 9 99.5 9 132.1s2.7 102.7-9 132.1z"/></svg>
      <svg class="soc soc-tw" viewBox="0 48 512 416"><path d="M459.37 151.716c.325 4.548.325 9.097.325 13.645 0 138.72-105.583 298.558-298.558 298.558-59.452 0-114.68-17.219-161.137-47.106 8.447.974 16.568 1.299 25.34 1.299 49.055 0 94.213-16.568 130.274-44.832-46.132-.975-84.792-31.188-98.112-72.772 6.498.974 12.995 1.624 19.818 1.624 9.421 0 18.843-1.3 27.614-3.573-48.081-9.747-84.143-51.98-84.143-102.985v-1.299c13.969 7.797 30.214 12.67 47.431 13.319-28.264-18.843-46.781-51.005-46.781-87.391 0-19.492 5.197-37.36 14.294-52.954 51.655 63.675 129.3 105.258 216.365 109.807-1.624-7.797-2.599-15.918-2.599-24.04 0-57.828 46.782-104.934 104.934-104.934 30.213 0 57.502 12.67 76.67 33.137 23.715-4.548 46.456-13.645 66.599-25.665-7.798 24.366-24.366 44.833-46.132 57.827 21.117-2.273 41.584-8.122 60.426-16.243-14.292 20.791-32.161 39.308-52.628 54.253z"/></svg>
    </div>
  </div>
  <div class="foot-col">
    <h3 class="foot-h">Important Links</h3>
    <a class="foot-link">Our Policies</a>
    <a class="foot-link">Registartion Details</a>
    <a class="foot-link">Donate</a>
    <a class="foot-link">News,Articles</a>
    <a class="foot-link">Testimonals</a>
  </div>
  <div class="foot-col">
    <h3 class="foot-h foot-h-tight">Our Services</h3>
    <a class="foot-link">Our Homes</a>
    <a class="foot-link">Our Food</a>
    <a class="foot-link">Our Facilities</a>
    <a class="top-btn">Go To Top!</a>
  </div>
  <div class="foot-col foot-contact">
    <h3 class="foot-h">Contact Us</h3>
    <span class="foot-line foot-phone"><svg class="ic ic-foot-ph"><use href="#ic-phsq"/></svg>+(91) 9011001190</span>
    <span class="foot-line"><svg class="ic ic-foot-en"><use href="#ic-envo"/></svg></span>
    <span class="foot-line foot-mail">+inq.shashwati101@gmail.com</span>
    <div class="mini">
      <svg class="mini-svg" viewBox="0 0 355 200">
        <rect width="355" height="200" fill="#e6e6e6"/>
        <path class="mini-park" d="M40 150l25-12 20 22-5 40H40zM175 75h12l5 20-15 5z"/>
        <path class="river-mini" d="M55 55l15 20M75 90l5 25M65 125l15-5M100 135l-12 10M95 140l15-5M325 30l8 25M250 120l-5 15"/>
        <g class="mini-road"><path d="M0 20l30 60-30 30M0 140l30-10 30 70M0 120l60-30M185 0l-5 25-15 15-30 10M175 28l60-8 60-8 15-12M300 12l30 25 25 50M315 10l5 30M240 20l-30 60M185 95l60 0 50 10 60 30M160 130l-5 70M210 150l-30 50M165 170l50 30M150 55l-60-20M355 60l-30-10-30 30-45 40M210 110l60-2 50 10"/></g>
        <g class="mini-thin"><path d="M150 0l20 40M60 0l40 40M230 60l0 60-5 80M280 110l10 90M20 60l40 20"/></g>
        <path class="pune-outline" d="M146 90l10-8 14-3 10-8 12 6 14 6 -6 16 4 16-6 14-14 6-10 8-12-4-12-8-6-14 2-12-6-8 6-7z"/>
        <g class="mini-y"><path d="M165 100l20 3 5 20-15 10-20-5-5-17zM175 103l0 28"/></g>
        <circle cx="177" cy="103" r="4" fill="none" stroke="#333" stroke-width="1.6"/>
        <circle cx="81" cy="134" r="2.2" fill="none" stroke="#777"/>
        <text class="mini-city" x="177" y="68" text-anchor="middle">Pune</text>
        <text class="mini-cityd" x="177" y="92" text-anchor="middle">पुणे</text>
        <text class="mini-lb" x="56" y="75" text-anchor="middle">लोणावळा</text>
        <text class="mini-lb" x="81" y="111" text-anchor="middle">Lavasa</text>
        <text class="mini-lb" x="81" y="127" text-anchor="middle">लवासा</text>
        <path class="shield" d="M215 99h22v16l-11 8-11-8zM-8 109H8v14l-8 7-8-7z"/>
        <text class="mini-sh" x="226" y="116" text-anchor="middle">65</text>
        <text class="g-logo-mini" x="140" y="170" textLength="74" lengthAdjust="spacingAndGlyphs"><tspan class="g-b">G</tspan><tspan class="g-r">o</tspan><tspan class="g-y">o</tspan><tspan class="g-b">g</tspan><tspan class="g-g">l</tspan><tspan class="g-r">e</tspan></text>
      </svg>
      <a class="map-btn mini-btn">View larger map</a>
      <div class="mini-attr"><span class="mini-attr-item">Map data ©2020</span><span class="mini-attr-item">Terms of Use</span></div>
    </div>
  </div>
</footer>
<div class="copy">Copyrigts © 2020 -All Rights Reserved</div>
</body>
</html>
```

FILE: styles.css
```css
* { box-sizing: border-box; }
html, body { margin: 0; padding: 0; }
body {
  font-family: Inter, "Noto Sans", sans-serif;
  font-size: 25px;
  line-height: 36px;
  letter-spacing: .2px;
  color: #555;
  background: #f5f5f5;
  width: 1920px;
  overflow-x: hidden;
}
.defs { position: absolute; }
.ic { display: inline-block; fill: currentColor; flex: none; }
svg text { letter-spacing: 0; }

/* top bar */
.topbar {
  height: 51px;
  background: #f8f9ff;
  border: 1px solid #bdbdbd;
  display: flex;
  justify-content: flex-end;
  align-items: center;
  padding-right: 133px;
  gap: 18px;
  font-weight: 500;
  color: #2b303a;
}
.top-item { display: flex; align-items: center; gap: 5px; }
.top-phone { font-size: 21px; letter-spacing: 0; }
.top-mail { font-size: 22.95px; letter-spacing: 0; }
.ic-top-ph { width: 19px; height: 19px; }
.ic-top-en { width: 22px; height: 22px; }

/* nav */
.navbar {
  height: 98px;
  background: #343a40;
  display: flex;
  align-items: center;
  padding-left: 24px;
  padding-right: 36px;
  font-size: 27px;
  font-weight: 500;
  letter-spacing: .3px;
}
.nav-logo { width: 255px; height: 58px; margin-right: 24px; }
.leaf-l ellipse { fill: #a9c440; }
.leaf-d ellipse { fill: #2e6a3c; }
.trunk { fill: #2b2f33; }
.logo-word { font-family: "Liberation Sans", sans-serif; font-weight: 700; font-size: 29px; fill: #d62f2b; }
.nav-link { color: rgba(255,255,255,.5); padding: 0 12px; white-space: nowrap; }
.nav-open { color: rgba(255,255,255,.75); display: flex; align-items: center; }
.nav-active { color: #fff; }
.nav-login { margin-left: auto; padding: 0; }
.caret {
  width: 0; height: 0; margin-left: 8px;
  border-top: 7px solid currentColor;
  border-left: 7px solid transparent;
  border-right: 7px solid transparent;
}

/* page head */
.page-head {
  background: #dfdbda;
  height: 212px;
  padding: 24px 129px 0;
}
.page-title {
  margin: 0 0 11px;
  font-size: 49px;
  line-height: 58px;
  font-weight: 500;
  letter-spacing: .6px;
  color: #555;
}
.crumbs {
  height: 72px;
  background: #e9ecef;
  border-radius: 5px;
  padding: 0 24px;
  display: flex;
  align-items: center;
  font-weight: 500;
}
.crumb-home { color: #007bff; }
.crumb-sep { color: #6c757d; font-weight: 400; font-size: 28px; margin: 0 13px; }
.crumb-cur { color: #6c757d; }

/* main */
.main { padding: 25px 117px 24px; }
.intro { margin: 0; font-size: 27px; line-height: 39px; letter-spacing: .48px; color: #555; }
.rule { margin: 24px 0 32px; border: 0; border-top: 1px solid #dcdcdc; }
.contact-row { display: flex; padding-left: 11px; }
.form { width: 810px; display: flex; flex-direction: column; gap: 24px; padding-top: 4px; }
.form-two { display: grid; grid-template-columns: 397px 398px; gap: 15px; }
.field {
  display: block;
  width: 100%;
  height: 57px;
  padding: 0 18px;
  font: inherit;
  letter-spacing: .1px;
  color: #495057;
  background: #fff;
  border: 1px solid #ced4da;
  border-radius: 5px;
}
.field::placeholder { color: #6c757d; opacity: 1; }
.field-select {
  padding-left: 24px;
  appearance: none;
  -webkit-appearance: none;
  background: #fff url("data:image/svg+xml,%3Csvg xmlns='http://www.w3.org/2000/svg' width='14' height='9' viewBox='0 0 14 9'%3E%3Cpath d='M1 1l6 6 6-6' fill='none' stroke='%23333' stroke-width='1.6'/%3E%3C/svg%3E") no-repeat right 7px center;
}
.field-area { height: 129px; padding: 8px 18px; resize: vertical; }
.submit {
  align-self: center;
  width: 155px;
  height: 57px;
  margin-right: 2px;
  border: 0;
  border-radius: 5px;
  background: #28a745;
  color: #fff;
  font: inherit;
  letter-spacing: .2px;
  display: flex;
  align-items: center;
  justify-content: center;
  gap: 6px;
}
.ic-plane { width: 25px; height: 25px; }
.info { margin-left: 44px; display: flex; flex-direction: column; align-items: flex-start; }
.info-h { margin: 0 0 8px; font-size: 32px; line-height: 44px; font-weight: 400; letter-spacing: .1px; color: #555; }
.info-next { margin-top: 20px; }
.info-link { color: #007bff; display: flex; align-items: center; gap: 7px; letter-spacing: .35px; }
.info-phone { font-size: 24px; letter-spacing: 0; }
.ic-blue { width: 24px; height: 24px; }
.ic-globe { width: 23px; }
.info-web { gap: 6px; }
.info-text { margin: 0; color: #555; }
.info-addr { letter-spacing: 0; }

/* map */
.map { position: relative; height: 526px; overflow: hidden; }
.map-svg { display: block; width: 1920px; height: 526px; }
.park { fill: #c0dbbb; stroke: #c0dbbb; stroke-width: 5; stroke-linejoin: round; }
.urban { fill: #ece5cd; }
.road { fill: none; stroke: #e9e9e9; stroke-width: 2.2; }
.road-thin { fill: none; stroke: #e4e4e4; stroke-width: 1; }
.rail { fill: none; stroke: #c6c6c6; stroke-width: 1.4; }
.lake { fill: #9dc9ea; }
.river { fill: none; stroke: #9dc9ea; stroke-width: 10; }
.river-thin { fill: none; stroke: #a6cfec; stroke-width: 1.6; }
.hwy { fill: none; stroke: #f1d98e; stroke-width: 3.4; stroke-linejoin: round; }
.pin-slate { fill: #6b8797; }
.pin-indigo { fill: #6d78bd; }
.pin-green { fill: #2f9e50; }
.pin-red { fill: #dd5b4f; }
.pin-blue { fill: #1a6fd0; }
.pin-teal { fill: #16a1b5; }
.pin-teal2 { fill: #14899b; }
.pin-pink { fill: #c23b6c; }
.glyph { fill: #fff; opacity: .9; }
.om text { font: 700 16px "Noto Sans", Roboto, sans-serif; fill: #fff; text-anchor: middle; }
.pin-h text { font: 700 17px Roboto, sans-serif; fill: #fff; }
.metro { fill: #1a6fd6; }
.metro-in { fill: #fff; }
.shield { fill: #f5d142; stroke: #dcb52c; stroke-width: .8; }
.shield-t text { font: 500 11px Roboto, sans-serif; fill: #333; text-anchor: middle; }
.rd text { font: 500 9.5px Roboto, sans-serif; fill: #667380; paint-order: stroke; stroke: #dedede; stroke-width: 1.5px; }
.lbl text, .c-green .sz, .c-red .sz, .c-indigo .sz, .c-blue .sz, .c-teal .sz {
  font: 400 15.5px Roboto, sans-serif;
  paint-order: stroke;
  stroke: #e4e4e4;
  stroke-width: 1.6px;
}
.lbl text { fill: #5f6d7a; }
.dev text, .szd { font: 400 12px "Noto Sans Devanagari", "Noto Sans", Roboto, sans-serif; paint-order: stroke; stroke: #e4e4e4; stroke-width: 1.4px; }
.dev text { fill: #5f6d7a; }
.area text { font: 700 13px Roboto, sans-serif; fill: #5a6675; paint-order: stroke; stroke: #e2e2e2; stroke-width: 1.5px; }
.area-big text { font: 700 18.5px Roboto, sans-serif; fill: #56647a; paint-order: stroke; stroke: #e2e2e2; stroke-width: 1.5px; }
.dev-b text { font: 700 14px "Noto Sans Devanagari", "Noto Sans", Roboto, sans-serif; fill: #56606e; paint-order: stroke; stroke: #e2e2e2; stroke-width: 1.5px; }
.c-green { fill: #2f9158; }
.c-red { fill: #d4413a; }
.c-indigo { fill: #5a67c2; }
.c-blue { fill: #2f72d8; }
.c-teal { fill: #1b8595; }
.city-en { font: 700 23px Roboto, sans-serif; fill: #b3150c; paint-order: stroke; stroke: #eee; stroke-width: 1.5px; }
.city-hi { font: 700 24px "Noto Sans Devanagari", "Noto Sans", Roboto, sans-serif; fill: #b3150c; paint-order: stroke; stroke: #eee; stroke-width: 1.5px; }
.hint { font: 400 24.5px Roboto, sans-serif; fill: rgba(255,255,255,.62); }
.band { fill: rgba(0,0,0,.42); }
.g-logo { font: 500 17.5px "Open Sans", sans-serif; paint-order: stroke; stroke: #fff; stroke-width: 1.5px; }
.g-logo-mini { font: 500 23px "Open Sans", sans-serif; paint-order: stroke; stroke: #fff; stroke-width: 1.5px; }
.g-b { fill: #4285f4; } .g-r { fill: #ea4335; } .g-y { fill: #fbbc05; } .g-g { fill: #34a853; }
.map-btn {
  position: absolute;
  left: 15px;
  top: 15px;
  width: 174px;
  height: 40px;
  background: #fff;
  color: #3f7ee8;
  font: 400 18px/40px Roboto, sans-serif;
  letter-spacing: 0;
  text-align: center;
  border-radius: 2px;
  box-shadow: 0 1px 3px rgba(0,0,0,.25);
}
.map-thumb {
  position: absolute;
  left: 15px;
  top: 430px;
  width: 63px;
  height: 63px;
  border: 3px solid #fff;
  border-radius: 3px;
  box-shadow: 0 1px 4px rgba(0,0,0,.3);
}
.map-zoom {
  position: absolute;
  right: 16px;
  top: 369px;
  width: 60px;
  height: 120px;
  background: #fff;
  border-radius: 2px;
  display: flex;
  flex-direction: column;
  align-items: center;
  box-shadow: 0 1px 4px rgba(0,0,0,.3);
}
.zoom-plus { position: relative; width: 28px; height: 28px; margin-top: 16px; }
.zoom-plus::before { content: ""; position: absolute; left: 0; right: 0; top: 11px; height: 6px; background: #666; }
.zoom-plus::after { content: ""; position: absolute; top: 0; bottom: 0; left: 11px; width: 6px; background: #666; }
.zoom-sep { width: 44px; height: 1px; background: #e6e6e6; margin-top: 16px; }
.zoom-minus { width: 28px; height: 6px; background: #666; margin-top: 27px; }
.map-attr {
  position: absolute;
  right: 0;
  bottom: 0;
  height: 21px;
  display: flex;
  background: rgba(255,255,255,.7);
  font: 400 15px/21px Roboto, sans-serif;
  letter-spacing: 0;
  color: #222;
}
.attr-item { padding: 0 9px; }
.attr-line { border-left: 1px solid #aaa; }

/* footer */
.footer {
  margin-top: 9px;
  height: 425px;
  background: #2e3437;
  color: #fff;
  display: grid;
  grid-template-columns: repeat(4, 427px);
  padding: 30px 0 0 142px;
}
.foot-col { display: flex; flex-direction: column; align-items: flex-start; }
.foot-logo { width: 180px; height: 42px; flex: none; display: block; margin: 1px 0 -1px 1px; }
.foot-text { margin: 0; color: #fff; white-space: nowrap; }
.foot-link { color: #fff; font-weight: 500; }
.social { display: flex; gap: 18px; margin: 27px 0 0 6px; }
.soc { height: 42px; fill: #b8b8b8; }
.soc-fb, .soc-ig { width: 42px; }
.soc-tw { width: 48px; }
.foot-h { margin: 0 0 12px; font-size: 43px; line-height: 50px; font-weight: 500; letter-spacing: .5px; color: #fff; }
.foot-h-tight { letter-spacing: 0; }
.top-btn {
  margin-top: 12px;
  width: 166px;
  height: 57px;
  border: 1px solid #fff;
  border-radius: 5px;
  text-align: center;
  line-height: 55px;
  color: #fff;
}
.foot-line { display: flex; align-items: center; gap: 6px; height: 36px; font-weight: 400; white-space: nowrap; }
.foot-phone { font-size: 24px; letter-spacing: 0; }
.foot-mail { letter-spacing: .5px; }
.ic-foot-ph { width: 21px; height: 21px; margin-left: 5px; }
.ic-foot-en { width: 25px; height: 25px; margin-left: 5px; }
.mini { position: relative; width: 355px; height: 200px; overflow: hidden; margin-left: 1px; }
.mini-svg { display: block; width: 355px; height: 200px; }
.mini-park { fill: #c8e2cb; }
.river-mini { fill: none; stroke: #9fcdf0; stroke-width: 2.5; }
.mini-road { fill: none; stroke: #f0d78f; stroke-width: 1.8; }
.mini-thin { fill: none; stroke: #f6f6f6; stroke-width: 1.4; }
.mini-y { fill: none; stroke: #f0d78f; stroke-width: 2; }
.pune-outline { fill: #efefef; stroke: #e0504a; stroke-width: 1.2; }
.mini-city { font: 700 24px Roboto, sans-serif; fill: #b3150c; paint-order: stroke; stroke: #fff; stroke-width: 1.5px; }
.mini-cityd { font: 700 24px "Noto Sans", Roboto, sans-serif; fill: #b3150c; paint-order: stroke; stroke: #fff; stroke-width: 1.5px; }
.mini-lb { font: 400 16px "Noto Sans", Roboto, sans-serif; fill: #666; paint-order: stroke; stroke: #fff; stroke-width: 1.2px; }
.mini-sh { font: 500 14px Roboto, sans-serif; fill: #333; }
.mini-btn { left: 15px; top: 15px; }
.mini-attr {
  position: absolute;
  right: 0;
  bottom: 0;
  height: 21px;
  display: flex;
  background: rgba(255,255,255,.7);
  font: 400 15px/21px Roboto, sans-serif;
  letter-spacing: 0;
  color: #222;
}
.mini-attr-item { padding: 0 8px; }

.copy {
  height: 71px;
  background: #000;
  color: #fff2d8;
  font-size: 24.5px;
  text-align: center;
  line-height: 59px;
}
```
